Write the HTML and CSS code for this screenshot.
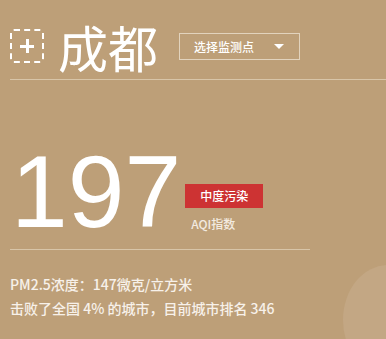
FILE: index.html
```html
<!DOCTYPE html>
<html lang="zh-CN">

<head>
    <meta charset="UTF-8" />
    <title>成都</title>
    <link rel="stylesheet" href="styles.css">
</head>

<body>
    <div class="page">
        <div class="header">
            <div class="add-btn"><span class="plus"></span></div>
            <h1 class="city">成都</h1>
            <div class="station-select">
                <span>选择监测点</span>
                <span class="arrow"></span>
            </div>
        </div>
        <div class="aqi-row">
            <div class="aqi-value">197</div>
            <div class="aqi-side">
                <div class="level">中度污染</div>
                <div class="aqi-label">AQI指数</div>
            </div>
        </div>
        <div class="detail">
            <p>PM2.5浓度：147微克/立方米</p>
            <p>击败了全国 4% 的城市，目前城市排名 346</p>
        </div>
        <div class="bg-blob"></div>
    </div>
</body>

</html>
```

FILE: styles.css
```css
html,
body {
    margin: 0;
    padding: 0;
}

body {
    background-color: #bd9f78;
    font-family: "Noto Sans CJK SC", "Microsoft YaHei", sans-serif;
    color: #fff;
}

.page {
    position: relative;
    width: 386px;
    height: 339px;
    overflow: hidden;
}

.header {
    display: flex;
    align-items: center;
    margin-left: 10px;
    height: 80px;
    border-bottom: 1px solid #d8c5a8;
    box-sizing: border-box;
    padding-top: 13px;
}

.add-btn {
    width: 34px;
    height: 34px;
    box-sizing: border-box;
    border: 2px dashed #fff;
    border-radius: 4px;
    display: flex;
    align-items: center;
    justify-content: center;
}

.plus {
    position: relative;
    width: 14px;
    height: 3px;
    background: #fff;
}

.plus::after {
    content: "";
    position: absolute;
    left: 5.5px;
    top: -5.5px;
    width: 3px;
    height: 14px;
    background: #fff;
}

.city {
    margin: 0 0 0 14px;
    font-size: 50px;
    font-weight: normal;
    line-height: 1;
    letter-spacing: 0;
}

.station-select {
    margin-left: 21px;
    width: 121px;
    height: 27px;
    box-sizing: border-box;
    border: 1px solid #e2d3bd;
    display: flex;
    align-items: center;
    padding: 0 15px 0 14px;
    justify-content: space-between;
    font-size: 12px;
    font-weight: 500;
}

.arrow {
    width: 0;
    height: 0;
    border-left: 5px solid transparent;
    border-right: 5px solid transparent;
    border-top: 5px solid #fff;
}

.aqi-row {
    display: flex;
    align-items: flex-end;
    margin-left: 10px;
    width: 300px;
    height: 170px;
    box-sizing: border-box;
    border-bottom: 1px solid #d8c5a8;
    padding-bottom: 6px;
}

.aqi-value {
    font-family: "Liberation Sans", Arial, sans-serif;
    font-size: 102px;
    line-height: 1;
    margin-left: 1px;
}

.aqi-side {
    margin-left: 4px;
    margin-bottom: 11px;
}

.level {
    width: 78px;
    height: 24px;
    line-height: 24px;
    background: #cd3333;
    text-align: center;
    font-size: 12px;
    font-weight: 500;
}

.aqi-label {
    margin: 8px 0 0 6px;
    font-size: 12px;
    line-height: 16px;
    font-weight: 500;
    color: #f3ebe0;
}

.detail {
    margin: 22px 0 0 10px;
    font-size: 14px;
    font-weight: 500;
    color: #f7f1ea;
}

.detail p {
    margin: 0;
    line-height: 24px;
}

.bg-blob {
    position: absolute;
    left: 343px;
    top: 265px;
    width: 90px;
    height: 110px;
    border-radius: 50%;
    background: #c3a784;
}
```
